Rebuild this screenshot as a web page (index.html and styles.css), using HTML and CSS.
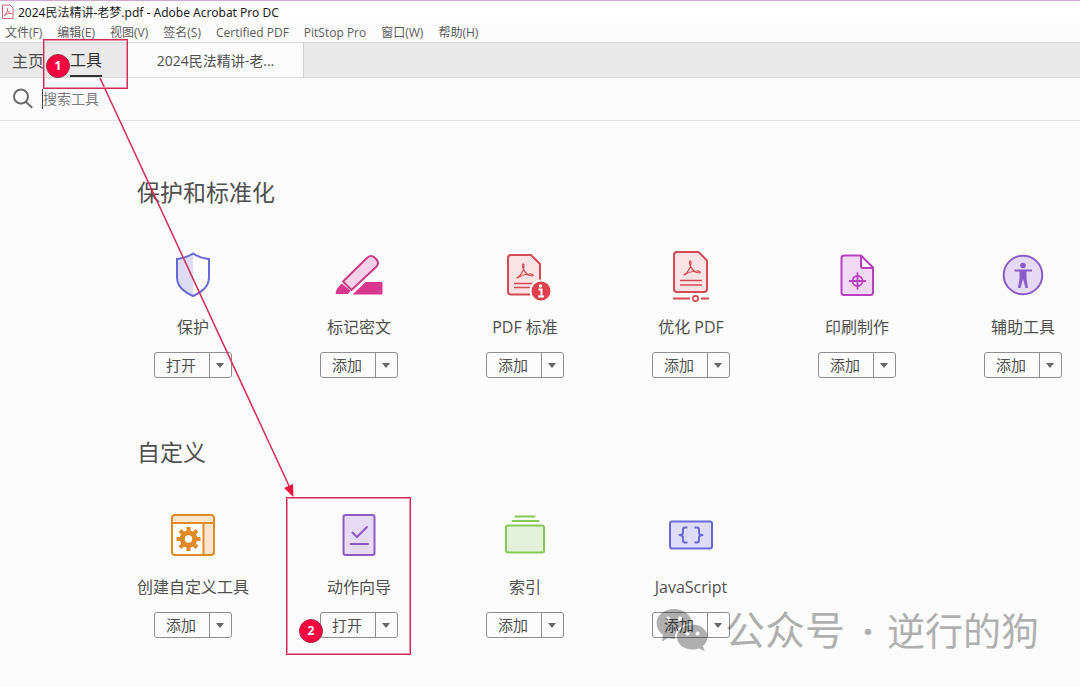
FILE: index.html
```html
<!DOCTYPE html>
<html lang="zh-CN">
<head>
<meta charset="utf-8">
<title>2024民法精讲-老梦.pdf - Adobe Acrobat Pro DC</title>
<link rel="stylesheet" href="styles.css">
</head>
<body>
<div class="app">
  <header class="titlebar">
    <svg class="app-icon" width="13" height="16" viewBox="0 0 13 16" fill="#fff" stroke="#d9606a" stroke-linejoin="round"><path d="M1.500 1h7.500l3 3v10.500h-10.500z"/><path d="M3 11.500c2-1 3.500-3.500 3.500-7 0 3 1.500 5 4 5-3-.5-5 .5-7.500 2z" fill="none"/></svg>
    <span>2024民法精讲-老梦.pdf - Adobe Acrobat Pro DC</span>
  </header>
  <nav class="menubar">
    <button>文件(F)</button><button>编辑(E)</button><button>视图(V)</button><button>签名(S)</button><button>Certified PDF</button><button>PitStop Pro</button><button>窗口(W)</button><button>帮助(H)</button>
  </nav>
  <nav class="tabs">
    <div class="main-tabs">
      <button class="tab">主页</button>
      <button class="tab tab-current">工具</button>
    </div>
    <button class="doc-tab">2024民法精讲-老...</button>
  </nav>
  <div class="search">
    <svg width="22" height="22" viewBox="0 0 22 22" fill="none" stroke="#6b6b6b" stroke-width="2"><circle cx="9" cy="8.500" r="7"/><path d="M13.700 13.700l6.500 6"/></svg>
    <input type="text" placeholder="搜索工具" aria-label="搜索工具">
  </div>
  <main>
    <section>
      <h2>保护和标准化</h2>
      <div class="grid">
        <article class="tool">
          <svg width="50" height="50" viewBox="0 0 50 50"><path d="M25 4c-5 3.500-10 5-16 5.500v18c0 10 8 15 16 19z" fill="#dedcf5"/><path d="M25 3.500c-5 3.500-10 5-16 5.500v18.500c0 10 8 15 16 18.500 8-3.500 16-8.500 16-18.500v-18.500c-6-.5-11-2-16-5.500z" fill="none" stroke="#6a68d6" stroke-width="2"/></svg>
          <h3>保护</h3>
          <div class="split"><button>打开</button><button class="drop" aria-label="更多"></button></div>
        </article>
        <article class="tool">
          <svg width="50" height="50" viewBox="0 0 50 50"><path d="M2 43.500q0-5 6-9.500l8 7-2 2.500z M19.500 44l12-11.500h16.500v11.500z" fill="#d9378f" stroke="#d9378f" stroke-linejoin="round"/><path d="M9 31.500l24.500-24q3.500-3 7 0l2 2q3 3.500 0 7l-25 23.500z" fill="#f6d2ea" stroke="#c93b86" stroke-width="2" stroke-linejoin="round"/></svg>
          <h3>标记密文</h3>
          <div class="split"><button>添加</button><button class="drop" aria-label="更多"></button></div>
        </article>
        <article class="tool">
          <svg width="54" height="50" viewBox="0 0 54 50"><path d="M13 5h20l9 9v28.500q0 2-2 2h-27q-3 0-3-3v-33.500q0-3 3-3z" fill="#fae3e4" stroke="#d14a56" stroke-width="2"/><path d="M16 33.500h21M16 37.500h18" stroke="#d14a56" stroke-width="1.500"/><path d="M18.500 28c3-1 8-7 7.500-13-.5-2.500-2.500-.5-1 3 2 5 5 8 9.500 8 2-.5-.5-2.500-3-2-5 .5-9 1.500-12 4z" fill="none" stroke="#d14a56" stroke-width="1.200"/><circle cx="43" cy="41" r="10.500" fill="#df404b" stroke="#fcfcfc" stroke-width="2"/><circle cx="42.500" cy="36" r="1.700" fill="#fff"/><path d="M40.500 39.500h3v7M40 46.500h6" fill="none" stroke="#fff" stroke-width="2"/></svg>
          <h3>PDF 标准</h3>
          <div class="split"><button>添加</button><button class="drop" aria-label="更多"></button></div>
        </article>
        <article class="tool">
          <svg width="50" height="54" viewBox="0 0 50 54"><path d="M11 4h21.500l8.500 8.500v28.500q0 3-3 3h-27q-3 0-3-3v-34q0-3 3-3z" fill="#fae3e4" stroke="#d14a56" stroke-width="2"/><path d="M14 32.500h22M14 37h22" stroke="#d14a56" stroke-width="1.500"/><path d="M17.500 27c3-1 8-7 7.500-13-.5-2.500-2.500-.5-1 3 2 5 5 8 9.500 8 2-.5-.5-2.500-3-2-5 .5-9 1.500-12 4z" fill="none" stroke="#d14a56" stroke-width="1.200"/><path d="M7 50.500h17M35 50.500h8" stroke="#d14a56" stroke-width="2"/><circle cx="29.500" cy="50.500" r="2.600" fill="#fff" stroke="#d14a56" stroke-width="1.700"/></svg>
          <h3>优化 PDF</h3>
          <div class="split"><button>添加</button><button class="drop" aria-label="更多"></button></div>
        </article>
        <article class="tool">
          <svg width="50" height="50" viewBox="0 0 50 50"><path d="M12 5.500h17l12 12v25q0 2.500-2.500 2.500h-26.500q-2.500 0-2.500-2.500v-34.500q0-2.500 2.500-2.500z" fill="#f1d8f4"/><path d="M29 5.500v10.500q0 2 2 2h10z" fill="#fcfcfc"/><path d="M12 5.500h17l12 12v25q0 2.500-2.500 2.500h-26.500q-2.500 0-2.500-2.500v-34.500q0-2.500 2.500-2.500zM29 5.500v10.500q0 2 2 2h10" fill="none" stroke="#b83fbd" stroke-width="2" stroke-linejoin="round"/><g fill="none" stroke="#b83fbd" stroke-width="1.800"><circle cx="25.500" cy="31" r="5"/><path d="M25.500 22.500v17M17 31h17"/></g></svg>
          <h3>印刷制作</h3>
          <div class="split"><button>添加</button><button class="drop" aria-label="更多"></button></div>
        </article>
        <article class="tool">
          <svg width="50" height="50" viewBox="0 0 50 50"><circle cx="25" cy="25" r="19.300" fill="#e6d9f6" stroke="#8a5cc8" stroke-width="2"/><circle cx="25" cy="15.500" r="2.800" fill="#8a5cc8"/><path d="M16.500 19.500h17.500v2h-5.500v7l1.500 9.500h-2.500l-2.500-9-2.500 9h-2.500l1.500-9.500v-7h-5z" fill="#8a5cc8"/></svg>
          <h3>辅助工具</h3>
          <div class="split"><button>添加</button><button class="drop" aria-label="更多"></button></div>
        </article>
      </div>
    </section>
    <section>
      <h2>自定义</h2>
      <div class="grid">
        <article class="tool">
          <svg width="50" height="50" viewBox="0 0 50 50"><rect x="4" y="5" width="42" height="40" rx="3" fill="#fff"/><path d="M4 5h42v40h-10.500v-32h-31.500z" fill="#fae6cf"/><g fill="none" stroke="#df8a26" stroke-width="2"><rect x="4" y="5" width="42" height="40" rx="3"/><path d="M4 13h42M35.500 13v32"/></g><circle cx="20.500" cy="29" r="6.200" fill="none" stroke="#df8a26" stroke-width="5"/><path d="M20.500 17v5M20.500 36v5M8.500 29h5M27.500 29h5M12 20.500l3.500 3.500M25.500 34l3.500 3.500M29 20.500l-3.500 3.500M15.500 34l-3.500 3.500" stroke="#df8a26" stroke-width="4"/></svg>
          <h3>创建自定义工具</h3>
          <div class="split"><button>添加</button><button class="drop" aria-label="更多"></button></div>
        </article>
        <article class="tool">
          <svg width="50" height="50" viewBox="0 0 50 50" fill="none" stroke="#8a5cc0" stroke-width="2" stroke-linecap="round"><rect x="9.500" y="5" width="31" height="40" rx="2" fill="#e6daf4"/><path d="M18.500 22.500l4.500 4.500 10-10M16.500 34h17.500"/></svg>
          <h3>动作向导</h3>
          <div class="split"><button>打开</button><button class="drop" aria-label="更多"></button></div>
        </article>
        <article class="tool">
          <svg width="50" height="50" viewBox="0 0 50 50" fill="none" stroke="#85c855" stroke-width="2" stroke-linecap="round"><rect x="6" y="15.500" width="38" height="27" rx="2" fill="#e3f0da"/><path d="M15.500 6.500h19M12.500 11h26"/></svg>
          <h3>索引</h3>
          <div class="split"><button>添加</button><button class="drop" aria-label="更多"></button></div>
        </article>
        <article class="tool">
          <svg width="50" height="50" viewBox="0 0 50 50" fill="none" stroke="#6a68d6" stroke-width="2" stroke-linejoin="round"><rect x="4" y="11.500" width="42" height="27" rx="2" fill="#dedcf8"/><path d="M21.500 17.500h-2.500q-2 0-2 2v3q0 2.500-3.500 2.500 3.500 0 3.500 2.500v3q0 2 2 2h2.500M28.500 17.500h2.500q2 0 2 2v3q0 2.500 3.500 2.500-3.500 0-3.500 2.500v3q0 2-2 2h-2.500"/></svg>
          <h3>JavaScript</h3>
          <div class="split"><button>添加</button><button class="drop" aria-label="更多"></button></div>
        </article>
      </div>
    </section>
  </main>
  <svg class="arrow" width="300" height="500" viewBox="0 0 300 500"><path d="M100 78L290 488" stroke="#d62a58" stroke-width="1.500"/><path d="M284 488l9-4 .500 13z" fill="#f0103c"/></svg>
  <div class="frame frame-tools"></div>
  <div class="frame frame-action"></div>
  <span class="badge badge-one">1</span>
  <span class="badge badge-two">2</span>
  <div class="watermark">
    <svg width="54" height="46" viewBox="0 0 54 46"><path fill-rule="evenodd" d="M18 2c10 0 18 6.500 18 14.500-10 0-17 6-17 13.500q0 1 .3 2-4 .3-7.300-1l-6 3.500 1-6.500q-6.500-5-6.500-12c0-7.500 7.500-14 17.500-14zM12 9.500a2.300 2.300 0 1 0 .1 0zM24 9.500a2.300 2.300 0 1 0 .1 0z"/><path fill-rule="evenodd" d="M36.500 17.500c8.500 0 15 5.500 15 12.500q0 5-4.500 9l1.500 5-5.500-2.500q-3 1-6.500 1c-8.500 0-15.500-5.500-15.500-12.500s7-12.500 15.500-12.500zM31.500 24.500a2 2 0 1 0 .1 0zM41.500 24.500a2 2 0 1 0 .1 0z"/></svg>
    <span class="watermark-kind">公众号</span><span class="dot">·</span><span>逆行的狗</span>
  </div>
</div>
</body>
</html>
```
FILE: styles.css
```css
* { box-sizing: border-box; }
body {
  margin: 0;
  background: #fcfcfc;
  color: #505050;
  font-family: "Open Sans", "Noto Sans CJK SC", sans-serif;
}
button, input { font: inherit; color: inherit; }
button { background: none; border: 0; padding: 0; white-space: nowrap; }
svg { display: block; flex: none; }

.app { position: relative; min-height: 100vh; overflow: hidden; }

.titlebar {
  display: flex;
  align-items: center;
  gap: 4px;
  height: 23px;
  padding-left: 1px;
  border-top: 1px solid #cdaad2;
  background: #fff;
  color: #1c1c1c;
  font-family: "Noto Sans", "Noto Sans CJK SC", sans-serif;
  font-size: 12px;
}
.menubar {
  display: flex;
  gap: 15px;
  height: 19px;
  padding-left: 5px;
  font-size: 12px;
  line-height: 18px;
  color: #5c5c5c;
}
.tabs {
  display: flex;
  height: 36px;
  background: #e9e9e9;
  border-top: 1px solid #d6d6d6;
  border-bottom: 1px solid #dcdcdc;
}
.main-tabs { display: flex; gap: 26px; width: 128px; padding-left: 12px; }
.tab { font-size: 16px; }
.tab-current { border-bottom: 2px solid #333; color: #333; }
.doc-tab {
  width: 176px;
  border-right: 1px solid #d0d0d0;
  background: #fcfcfc;
  font-size: 14px;
}
.search {
  display: flex;
  align-items: center;
  gap: 8px;
  height: 43px;
  padding-left: 12px;
  border-bottom: 1px solid #e2e2e2;
}
.search input {
  width: 240px;
  height: 20px;
  padding: 0 0 2px;
  border: 0;
  border-left: 1px solid #444;
  background: none;
  font-size: 14px;
  outline: 0;
}
.search input::placeholder { color: #7c7c7c; opacity: 1; }

main { padding: 50px 0 0 110px; }
section { height: 260px; }
h2 {
  margin: 0 0 34px;
  padding-left: 27px;
  font-size: 23px;
  font-weight: 400;
  line-height: 42px;
}
.grid { display: grid; grid-template-columns: repeat(6, 166px); }
.tool { display: flex; flex-direction: column; align-items: center; }
.tool svg { height: 56px; }
h3 {
  margin: 12px 0 13px;
  font-size: 16px;
  font-weight: 400;
  line-height: 24px;
}
.split {
  display: flex;
  height: 26px;
  border: 1px solid #8f8f8f;
  border-radius: 3px;
  font-size: 15px;
  line-height: 24px;
}
.split button { width: 54px; padding-right: 2px; }
.split .drop {
  display: grid;
  place-items: center;
  width: 22px;
  border-left: 1px solid #8f8f8f;
}
.drop::before {
  content: "";
  border: 4px solid transparent;
  border-top: 5px solid #666;
  border-bottom: 0;
}

.arrow { position: absolute; left: 0; top: 0; pointer-events: none; }
.frame { position: absolute; border: 1px solid #d62a58; outline: 1px solid #e890a8; outline-offset: -2px; pointer-events: none; }
.frame-tools { left: 43px; top: 39px; width: 85px; height: 50px; }
.frame-action { left: 286px; top: 497px; width: 125px; height: 158px; }
.badge {
  position: absolute;
  width: 24px;
  height: 24px;
  border: 1px solid #a03048;
  border-radius: 50%;
  background: #f5053f;
  color: #fff;
  font-size: 12px;
  font-weight: 700;
  line-height: 22px;
  text-align: center;
}
.badge-one { left: 46px; top: 54px; }
.badge-two { left: 299px; top: 619px; }
.watermark {
  position: absolute;
  left: 656px;
  top: 605px;
  display: flex;
  align-items: center;
  color: #000;
  fill: #000;
  font-size: 38px;
  line-height: 50px;
  opacity: 0.3;
  white-space: nowrap;
  pointer-events: none;
}
.watermark svg { margin-right: 15px; }
.watermark-kind { font-size: 40px; }
.dot { width: 42px; padding-left: 4px; font-weight: 700; text-align: center; }
```
